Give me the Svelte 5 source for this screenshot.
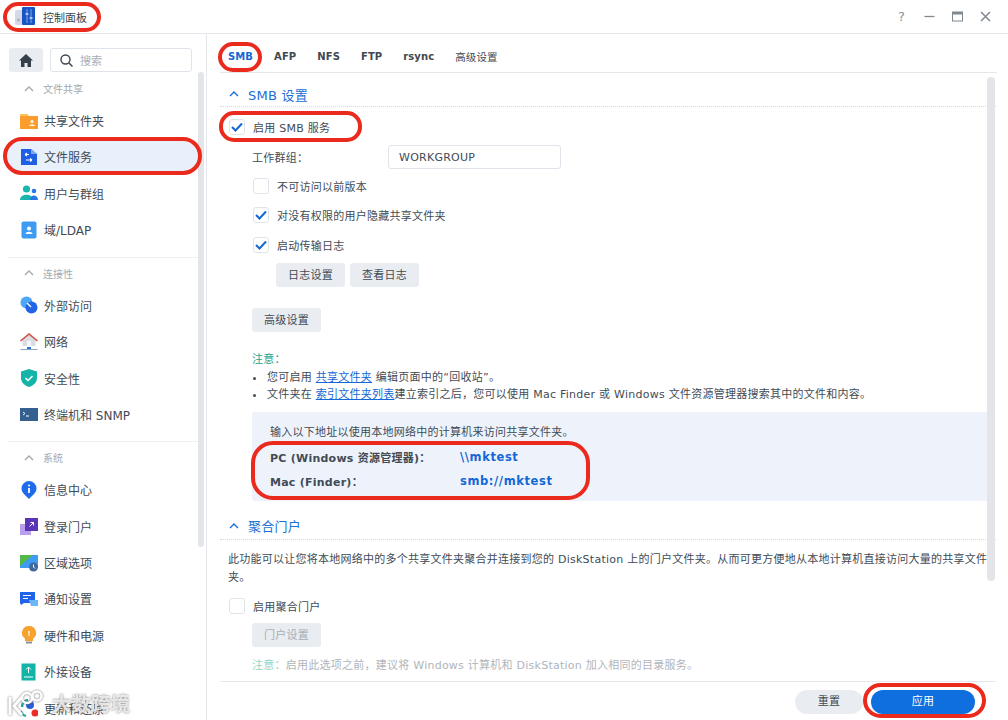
<script lang="ts">
  const groups = [
    { title: '文件共享', items: [['folder', '共享文件夹'], ['service', '文件服务'], ['users', '用户与群组'], ['ldap', '域/LDAP']] },
    { title: '连接性', items: [['link', '外部访问'], ['net', '网络'], ['shield', '安全性'], ['term', '终端机和 SNMP']] },
    { title: '系统', items: [['info', '信息中心'], ['portal', '登录门户'], ['region', '区域选项'], ['notify', '通知设置'], ['bulb', '硬件和电源'], ['ext', '外接设备'], ['update', '更新和还原']] },
  ];
  const tabs = ['SMB', 'AFP', 'NFS', 'FTP', 'rsync', '高级设置'];
</script>

{#snippet chevron()}
  <svg class="chev" width="10" height="6" viewBox="0 0 10 6"><path d="M1 5l4-4 4 4" fill="none" stroke="currentColor" stroke-width="1.4"/></svg>
{/snippet}

{#snippet check(on)}
  <span class="check" class:on>
    {#if on}
      <svg width="12" height="10" viewBox="0 0 12 10"><path d="M1 5l3.500 3.500L11 1.500" fill="none" stroke="#1467d6" stroke-width="2"/></svg>
    {/if}
  </span>
{/snippet}

{#snippet icon(name)}
  <svg class="ico" width="18" height="18" viewBox="0 0 18 18">
    {#if name === 'folder'}
      <path d="M0 2h7l2 2h9v13H0z" fill="#fb9d2c"/><path d="M0 2h7l2 2H0z" fill="#fdc163"/><circle cx="12" cy="9.500" r="1.500" fill="#fff"/><path d="M9 14c0-2 6-2 6 0z" fill="#fff"/>
    {:else if name === 'service'}
      <path d="M1 1h10l6 5v11H1z" fill="#1f5fe6"/><path d="M11 1l6 5h-6z" fill="#7da6f5"/><path d="M9 6.500L5 6.500M5 6.500l2-1.600M5 6.500l2 1.600M6 12h6M12 12l-2-1.600M12 12l-2 1.600" stroke="#fff" stroke-width="1.100" fill="none"/>
    {:else if name === 'users'}
      <circle cx="6.500" cy="5" r="3.600" fill="#18b6ac"/><path d="M0 16c0-7 13-7 13 0z" fill="#18b6ac"/><circle cx="14" cy="7" r="2.300" fill="#2a76e6"/><path d="M10 16c0-6 8-6 8 0z" fill="#2a76e6"/>
    {:else if name === 'ldap'}
      <rect x="1.500" y="0.500" width="15" height="17" rx="2" fill="#3e9bf2"/><circle cx="9" cy="7.500" r="2" fill="#fff"/><path d="M5.500 13c0-3 7-3 7 0z" fill="#fff"/>
    {:else if name === 'link'}
      <circle cx="6.500" cy="6.500" r="6" fill="#4ea6f7"/><circle cx="11.500" cy="11.500" r="6" fill="#2263e8"/><path d="M7 7l4 4" stroke="#fff" stroke-width="1.400"/>
    {:else if name === 'net'}
      <path d="M9 0L0 7.500h2.500V13h13V7.500H18z" fill="#d9dde2"/><path d="M9 0L0 7.500l1 1L9 2l8 6.500 1-1z" fill="#d2544a"/><rect x="7" y="8" width="4" height="5" fill="#f4f6f8"/><path d="M7 14h4v2H7z" fill="#2a6ee0"/><path d="M0.500 16.500h17" stroke="#8aa3c6"/>
    {:else if name === 'shield'}
      <path d="M9 0l8 2.500V9c0 5-4 7.500-8 9-4-1.500-8-4-8-9V2.500z" fill="#14b5a8"/><path d="M5.500 9l2.500 2.500 4.500-4.500" fill="none" stroke="#fff" stroke-width="1.500"/>
    {:else if name === 'term'}
      <rect x="0" y="3" width="18" height="13" fill="#33608f"/><path d="M3 7l2 1.500-2 1.500" fill="none" stroke="#fff" stroke-width="0.900"/><path d="M6 11h3" stroke="#fff"/>
    {:else if name === 'info'}
      <path d="M9 18C4 13 1.500 11 1.500 7.500a7.500 7.500 0 0115 0C16.500 11 14 13 9 18z" fill="#1e6cec"/><circle cx="9" cy="4.500" r="1" fill="#fff"/><path d="M9 7v5" stroke="#fff" stroke-width="1.800"/>
    {:else if name === 'portal'}
      <rect x="0" y="7" width="11" height="11" fill="#b8a0ec"/><rect x="5" y="1" width="13" height="13" fill="#5a35b8"/><path d="M9.500 9.500l4-4M10.500 5.500h3v3" stroke="#fff" fill="none"/>
    {:else if name === 'region'}
      <path d="M0 1h18v13H0z" fill="#3e9bf2"/><path d="M0 1h13L0 12z" fill="#54b948"/><circle cx="13.500" cy="13" r="4.500" fill="#41689b"/><path d="M13.500 10.500V13l1.500 1.500" stroke="#fff" fill="none"/>
    {:else if name === 'notify'}
      <path d="M0 2h15v11H4l-3 2-1-2z" fill="#2163e8"/><path d="M3 5.500h8M3 8.500h5" stroke="#fff" stroke-width="1.200"/><path d="M9 10h9v6h-7z" fill="#6cb6f6"/>
    {:else if name === 'bulb'}
      <path d="M9 0a7 7 0 00-4 12.800V15h8v-2.200A7 7 0 009 0z" fill="#f9a12e"/><rect x="6" y="15.500" width="6" height="2" fill="#8d8f94"/><circle cx="9" cy="6" r="1" fill="#fff"/><path d="M9 7v3" stroke="#fff"/>
    {:else if name === 'ext'}
      <rect x="1.500" y="0.500" width="14" height="17" fill="#13b4a8"/><path d="M8.500 10V4M6 6.500L8.500 4 11 6.500M4 14h9" stroke="#fff" fill="none"/>
    {:else if name === 'update'}
      <path d="M8 1a7 7 0 00-6 7" stroke="#16a99e" stroke-width="2.500" fill="none"/><path d="M6 17a7 7 0 01-5-5" stroke="#16a99e" stroke-width="2" fill="none"/><circle cx="10" cy="6" r="4" fill="#2a5fd6"/><circle cx="15" cy="14" r="3.500" fill="#ee2b24"/>
    {/if}
  </svg>
{/snippet}

<div class="window">
  <header class="titlebar">
    <svg class="logo" width="22" height="22" viewBox="0 0 22 22">
      <rect x="1" y="4" width="8" height="15" rx="1.500" fill="#d5d9e6"/>
      <circle cx="4.500" cy="14" r="1.500" fill="#a9b0c4"/>
      <rect x="8" y="1" width="13" height="18" rx="1" fill="#1a55c4"/>
      <path d="M13 3v14M17 3v14" stroke="#78a8f0" stroke-width="1"/>
      <path d="M11.500 8h3M15.500 12h3" stroke="#cfe0fb" stroke-width="1.500"/>
    </svg>
    <span class="app-name">控制面板</span>
    <div class="win-btns">
      <span class="help">?</span>
      <svg width="11" height="11" viewBox="0 0 11 11"><path d="M0.500 5.500h10" stroke="#808890" stroke-width="1.300"/></svg>
      <svg width="11" height="11" viewBox="0 0 11 11"><rect x="0.500" y="1" width="10" height="9" fill="none" stroke="#808890"/><rect x="0.500" y="1" width="10" height="2.500" fill="#808890"/></svg>
      <svg width="11" height="11" viewBox="0 0 11 11"><path d="M1 1l9 9M10 1l-9 9" stroke="#808890" stroke-width="1.500"/></svg>
    </div>
  </header>

  <div class="body">
    <aside class="sidebar">
      <div class="side-top">
        <button class="home" aria-label="主页">
          <svg width="14" height="13" viewBox="0 0 14 13"><path d="M7 0L0 6.500h2V13h3.500V9h3v4H12V6.500h2z" fill="#36404a"/></svg>
        </button>
        <div class="search">
          <svg width="13" height="13" viewBox="0 0 13 13"><circle cx="5.500" cy="5.500" r="4.500" fill="none" stroke="#3d4650" stroke-width="1.400"/><path d="M9 9l3.500 3.500" stroke="#3d4650" stroke-width="1.500"/></svg>
          <span>搜索</span>
        </div>
      </div>
      <div class="side-scroll"></div>
      {#each groups as g, i}
        <section class="group" class:ruled={i > 0}>
          <div class="group-title">
            {@render chevron()}
            <span>{g.title}</span>
          </div>
          {#each g.items as it}
            <div class="item" class:active={it[0] === 'service'}>
              {@render icon(it[0])}
              <span>{it[1]}</span>
            </div>
          {/each}
        </section>
      {/each}
    </aside>

    <main class="content">
      <nav class="tabs">
        {#each tabs as t, i}
          <span class="tab" class:current={i === 0}>{t}</span>
        {/each}
      </nav>
      <div class="main-scroll"></div>

      <div class="heading first">{@render chevron()}<span>SMB 设置</span></div>
      <div class="row lvl0 h-enable">{@render check(true)}<span>启用 SMB 服务</span></div>
      <div class="row lvl1 h-work">
        <span class="work-label">工作群组：</span>
        <span class="field">WORKGROUP</span>
      </div>
      <div class="row lvl2 h-opt1">{@render check(false)}<span>不可访问以前版本</span></div>
      <div class="row lvl2 h-opt">{@render check(true)}<span>对没有权限的用户隐藏共享文件夹</span></div>
      <div class="row lvl2 h-opt">{@render check(true)}<span>启动传输日志</span></div>
      <div class="btns log">
        <span class="btn">日志设置</span>
        <span class="btn">查看日志</span>
      </div>
      <div class="btns adv"><span class="btn">高级设置</span></div>

      <div class="note">
        <div class="note-head">注意：</div>
        <ul>
          <li>您可启用 <a href="#a">共享文件夹</a> 编辑页面中的“回收站”。</li>
          <li>文件夹在 <a href="#b">索引文件夹列表</a>建立索引之后，您可以使用 Mac Finder 或 Windows 文件资源管理器搜索其中的文件和内容。</li>
        </ul>
      </div>

      <div class="addr">
        <p>输入以下地址以使用本地网络中的计算机来访问共享文件夹。</p>
        <div class="addr-row"><b>PC (Windows 资源管理器)：</b><b class="val">\\mktest</b></div>
        <div class="addr-row"><b>Mac (Finder)：</b><b class="val">smb://mktest</b></div>
      </div>

      <div class="heading second">{@render chevron()}<span>聚合门户</span></div>
      <p class="para">此功能可以让您将本地网络中的多个共享文件夹聚合并连接到您的 DiskStation 上的门户文件夹。从而可更方便地从本地计算机直接访问大量的共享文件夹。</p>
      <div class="row lvl0 h-portal">{@render check(false)}<span>启用聚合门户</span></div>
      <div class="btns portal"><span class="btn off">门户设置</span></div>
      <div class="muted"><span class="muted-head">注意：</span>启用此选项之前，建议将 Windows 计算机和 DiskStation 加入相同的目录服务。</div>

      <footer class="foot">
        <span class="pill reset">重置</span>
        <span class="pill apply">应用</span>
      </footer>
    </main>
  </div>

  <!-- red annotation ovals drawn on top of the screenshot -->
  <span class="oval o-title"></span>
  <span class="oval o-service"></span>
  <span class="oval o-tab"></span>
  <span class="oval o-enable"></span>
  <span class="oval o-addr"></span>
  <span class="oval o-apply"></span>

  <div class="watermark">
    <svg width="42" height="26" viewBox="0 0 42 26"><path d="M4 7v18M16 7L8 16l8 9" fill="none" stroke="#fff" stroke-width="3"/><circle cx="21" cy="8" r="5" fill="none" stroke="#fff" stroke-width="2.500"/><circle cx="31" cy="6" r="4.500" fill="none" stroke="#fff" stroke-width="2.500"/></svg>
    <span>大数跨境</span>
  </div>
</div>

<style>
  :global(body) {
    margin: 0;
    background: #fff;
  }

  .window {
    position: relative;
    width: 1008px;
    height: 720px;
    overflow: hidden;
    display: flex;
    flex-direction: column;
    font-family: 'DejaVu Sans', 'Noto Sans CJK SC', sans-serif;
    font-size: 11px;
    color: #414b55;
    background: #fff;
  }

  .titlebar {
    flex: 0 0 auto;
    display: flex;
    align-items: center;
    padding: 0 17px 0 14px;
    border-bottom: 1px solid #e4e8ed;
    height: 33px;
  }

  .logo {
    margin-right: 7px;
  }

  .app-name {
    font-size: 11px;
    color: #3a434c;
  }

  .win-btns {
    margin-left: auto;
    display: flex;
    align-items: center;
    gap: 17px;
  }

  .help {
    font-size: 13px;
    color: #8a929a;
    margin-right: 2px;
  }

  .body {
    flex: 1;
    display: flex;
    min-height: 0;
  }

  .sidebar {
    position: relative;
    flex: 0 0 206px;
    border-right: 1px solid #e4e8ed;
    padding-top: 14px;
    overflow: hidden;
  }

  .side-top {
    display: flex;
    gap: 7px;
    padding-left: 9px;
    height: 25px;
  }

  .home {
    width: 34px;
    height: 24px;
    border: 0;
    padding: 0;
    border-radius: 3px;
    background: #e9edf2;
    display: flex;
    align-items: center;
    justify-content: center;
  }

  .search {
    width: 142px;
    height: 24px;
    box-sizing: border-box;
    border: 1px solid #dfe4ea;
    border-radius: 3px;
    display: flex;
    align-items: center;
    gap: 7px;
    padding-left: 9px;
    color: #a8aeb5;
  }

  .side-scroll {
    position: absolute;
    left: 198px;
    top: 38px;
    width: 6px;
    height: 475px;
    border-radius: 3px;
    background: #e3e5e8;
  }

  .group {
    margin-right: 8px;
  }

  .group.ruled {
    margin-left: 8px;
    border-top: 1px solid #ecf0f3;
    margin-top: 8.500px;
  }

  .group-title {
    height: 29.500px;
    box-sizing: border-box;
    padding: 2px 0 0 24px;
    display: flex;
    align-items: center;
    gap: 9px;
    font-size: 10px;
    color: #a3a9b0;
  }

  .group.ruled .group-title {
    padding-left: 16px;
  }

  .chev {
    flex: none;
  }

  .item {
    height: 36.400px;
    display: flex;
    align-items: center;
    padding-left: 20px;
    gap: 6px;
    font-size: 12px;
  }

  .group.ruled .item {
    padding-left: 12px;
  }

  .item.active {
    margin-left: 6px;
    padding-left: 14px;
    height: 32px;
    margin-top: 2px;
    margin-bottom: 2.400px;
    border-radius: 16px;
    background: #e8f0fb;
  }

  .ico {
    flex: none;
  }

  .content {
    position: relative;
    flex: 1;
    min-width: 0;
    padding: 0 12px 0 13px;
    letter-spacing: 0.25px;
  }

  .tabs {
    height: 39px;
    box-sizing: border-box;
    padding: 7px 0 0 8px;
    display: flex;
    align-items: center;
    gap: 21px;
    border-bottom: 1px solid #e4e8ed;
    margin-right: -1px;
    font-size: 10px;
    letter-spacing: 0.1px;
    font-weight: 700;
    color: #3f4850;
  }

  .tab.current {
    color: #1467d6;
  }

  .tab:last-child {
    font-size: 10.500px;
    font-weight: 400;
  }

  .main-scroll {
    position: absolute;
    left: 780px;
    top: 43px;
    width: 8px;
    height: 504px;
    border-radius: 4px;
    background: #e3e5e8;
  }

  .heading {
    height: 34px;
    display: flex;
    align-items: center;
    gap: 9px;
    padding-left: 9px;
    color: #1a6fd4;
    font-size: 13px;
    border-bottom: 1px dotted #d4d9df;
    box-sizing: border-box;
  }

  .heading.first {
    padding-top: 9px;
  }

  .heading.second {
    margin-top: 13px;
    height: 26px;
    padding-bottom: 2px;
  }

  .row {
    display: flex;
    align-items: center;
  }

  .row.lvl0 {
    gap: 8px;
    padding-left: 9px;
  }

  .row.lvl1 {
    padding-left: 32px;
  }

  .row.lvl2 {
    gap: 8px;
    padding-left: 33px;
  }

  .h-enable { height: 38px; box-sizing: border-box; padding-top: 2px; }
  .h-work { height: 24px; }
  .h-opt1 { height: 29px; margin-top: 2.500px; }
  .h-opt { height: 29.500px; }

  .work-label {
    width: 136px;
  }

  .field {
    width: 173px;
    height: 24px;
    box-sizing: border-box;
    border: 1px solid #dfe4ea;
    border-radius: 3px;
    padding-left: 10px;
    line-height: 24px;
  }

  .check {
    flex: none;
    width: 16px;
    height: 16px;
    box-sizing: border-box;
    border: 1px solid #dfe4ea;
    border-radius: 3px;
    background: #fff;
    display: flex;
    align-items: center;
    justify-content: center;
  }

  .btns {
    display: flex;
    gap: 5px;
  }

  .btns.log {
    padding-left: 56px;
    margin-top: 3px;
  }

  .btns.adv {
    padding-left: 32px;
    margin-top: 21.500px;
  }

  .btns.portal {
    padding-left: 32px;
    margin-top: 9px;
  }

  .btn {
    width: 69px;
    height: 24px;
    line-height: 26px;
    text-align: center;
    border-radius: 3px;
    background: #e9edf2;
  }

  .btn.off {
    color: #a8aeb5;
  }

  .note {
    padding-left: 32px;
    margin-top: 19px;
    line-height: 17.500px;
  }

  .note-head,
  .muted-head {
    color: #12a594;
  }

  ul {
    list-style: none;
    margin: 0;
    padding: 0;
  }

  li {
    position: relative;
    padding-left: 15px;
  }

  li::before {
    content: '';
    position: absolute;
    left: 1px;
    top: 8px;
    width: 3px;
    height: 3px;
    border-radius: 50%;
    background: #414b55;
  }

  a {
    color: #1467d6;
  }

  .addr {
    margin: 8.500px 7px 0 32px;
    height: 89px;
    box-sizing: border-box;
    padding: 13px 18px 0;
    background: #eef3fb;
    border-radius: 3px;
  }

  .addr p {
    margin: 0 0 4px;
    line-height: 16px;
  }

  .addr-row {
    height: 24px;
    display: flex;
    align-items: center;
  }

  .addr-row b:first-child {
    width: 190px;
  }

  .val {
    color: #1467d6;
    font-size: 11.500px;
    letter-spacing: 0.6px;
  }

  .para {
    margin: 11px 8px 0 8px;
    line-height: 18px;
  }

  .h-portal {
    height: 16px;
    margin-top: 11px;
  }

  .muted {
    padding-left: 32px;
    margin-top: 11px;
    color: #b0b5bb;
    line-height: 16px;
  }

  .muted-head {
    color: #8ed6cd;
  }

  .foot {
    position: absolute;
    left: 13px;
    right: 12px;
    bottom: 0;
    height: 36px;
    border-top: 1px solid #e4e8ed;
    display: flex;
    justify-content: flex-end;
    align-items: center;
    gap: 8px;
    padding: 2px 21px 0 0;
    box-sizing: content-box;
  }

  .pill {
    height: 24px;
    line-height: 24px;
    text-align: center;
    border-radius: 12px;
  }

  .reset {
    width: 68px;
    background: #e9edf2;
  }

  .apply {
    width: 104px;
    background: #0f6fde;
    color: #fff;
  }

  .oval {
    position: absolute;
    box-sizing: border-box;
    border: 4px solid #ea2a1c;
    pointer-events: none;
  }

  .o-title { left: 3px; top: 2px; width: 98px; height: 30px; border-radius: 15px; }
  .o-service { left: 3px; top: 137px; width: 199px; height: 38px; border-radius: 19px; }
  .o-tab { left: 218px; top: 42px; width: 44px; height: 30px; border-radius: 15px; }
  .o-enable { left: 219px; top: 111px; width: 143px; height: 31px; border-radius: 15px; }
  .o-addr { left: 251px; top: 441px; width: 339px; height: 59px; border-radius: 22px; }
  .o-apply { left: 863px; top: 683px; width: 123px; height: 35px; border-radius: 18px; }

  .watermark {
    position: absolute;
    left: 6px;
    top: 688px;
    display: flex;
    align-items: center;
    gap: 4px;
    color: rgba(240, 240, 240, 0.88);
    font-size: 19.500px;
    font-weight: 700;
    filter: drop-shadow(0 0 1px rgba(90, 90, 90, 0.85));
    pointer-events: none;
  }
</style>
